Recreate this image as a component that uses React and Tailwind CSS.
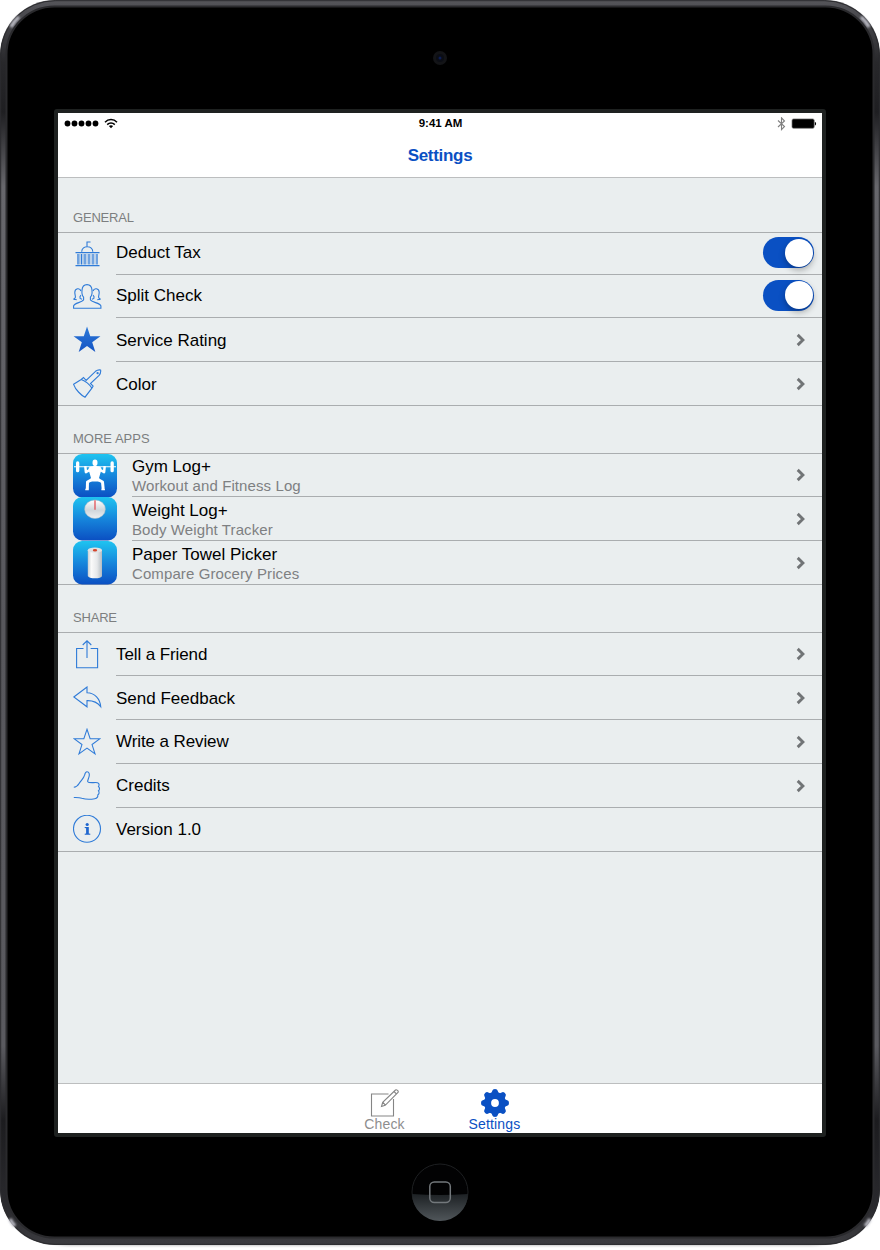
const blue = '#2f7bd8';

function Svg({ w = 30, h = 30, children, className = '' }) {
  return (
    <svg width={w} height={h} viewBox={`0 0 ${w} ${h}`} fill="none" stroke={blue} strokeWidth="1.1" className={className}>
      {children}
    </svg>
  );
}

const star = 'M14 .5l3.3 9.9h10.4l-8.4 6.2 3.2 9.9-8.5-6.1-8.5 6.1 3.2-9.9L.3 10.4h10.4z';

const icons = {
  bank: (
    <Svg w={28} h={28}>
      <path d="M14 6.500V2h3.500M8.700 11.800c.3-6.700 10.800-6.700 11.100 0" />
      <path d="M2.500 12.600h24M2.500 25.600h24" strokeWidth="1.300" />
      <path d="M5 14v10.500M8.500 14v10.500M12 14v10.500M16 14v10.500M20 14v10.500M24 14v10.500" strokeWidth="1.300" />
      <path d="M6.700 14v10.500M10.200 14v10.500M14 14v10.500M18 14v10.500M22 14v10.500" strokeWidth=".5" />
    </Svg>
  ),
  people: (
    <Svg w={30} h={28}>
      <path d="M.6 25.200v-2.400c.8-3 8.700-3.200 10-6v-2.600C8.500 12.100 8.800 9.600 9 7.100 9.300 2.900 11.100 1.600 14 1.600s4.700 1.400 5 5.500c.2 2.500.5 5-1.600 7.100v2.600c1.300 2.800 9.700 3 10.500 6v2.400z" />
      <path d="M7.900 8C7 4.700 1.900 5 1.800 9.300c0 2.700 1 4 .5 5.300-.3.900-1.500 1-1.500 1.600 1 .4 2 .2 3 .6M8 12.200c-.9.900-1.400 2-.9 3.200l1.900.9M20.100 8c.9-3.300 6-3 6.100 1.300 0 2.700-1 4-.5 5.300.3.900 1.500 1 1.500 1.600-1 .4-2 .2-3 .6M20 12.200c.9.900 1.400 2 .9 3.200l-1.900.9" />
    </Svg>
  ),
  starFilled: (
    <Svg w={28} h={28}>
      <defs>
        <linearGradient id="sg" x1="0" y1="0" x2="0" y2="1"><stop stopColor="#2d79d8" /><stop offset="1" stopColor="#1454c4" /></linearGradient>
      </defs>
      <path d={star} fill="url(#sg)" stroke="none" transform="translate(.3 .1) scale(.98)" />
    </Svg>
  ),
  brush: (
    <Svg w={30} h={30}>
      <path d="M.6 15.300L8.200 10.500l2.300-2 2.600 2.900L22.500 2.300c1.700-1.300 3.400-1.700 5.100-1.300.4 2-.3 3.800-1.500 5.400L17.500 14.500l2.600 2.600-1.200 2L12 28.200C8.500 26.500 2.500 21 .6 15.300z" />
      <path d="M8.200 10.500c4.500 1.700 8 4.500 10.700 8.600" />
      <circle cx="24.600" cy="4.200" r=".6" />
    </Svg>
  ),
  share: (
    <Svg w={28} h={30}>
      <path d="M10.500 8.500H3.600v19.300h21V8.500h-7M14 18V1M9.700 5L14 .8 18.300 5" />
    </Svg>
  ),
  reply: (
    <Svg w={30} h={24}>
      <path d="M.8 11L14 1v5.800c8 .2 13 6 13.700 13.800-3.400-4.500-8-6.200-13.700-6v6.200z" />
    </Svg>
  ),
  star: <Svg w={28} h={28}><path d={star} transform="translate(.7 .8) scale(.95)" /></Svg>,
  thumb: (
    <Svg w={28} h={30}>
      <path d="M.8 16.200c3-.2 4-1.500 5.300-3.700 1.800-3 4.700-5.200 5.500-8.300.4-1.900.6-3.500 2.400-3.500 2.200 0 2.800 2.700 2 5.200-.6 2-1.700 3.600-1.200 4.800 1.200 1.800 7.200.4 9.700 1 2 .5 1.800 2.800 1 3.800 1.400 1.200 1.200 3.500 0 4.300 1 1.300.7 3.400-.7 4.100.3 2-1 3.500-3 3.800-3.700.6-9.500.6-13-.5-2.300-.8-5-.8-8-.7" />
    </Svg>
  ),
  info: (
    <Svg w={30} h={30}>
      <circle cx="14" cy="13.800" r="13.500" />
      <circle cx="14.200" cy="9.500" r="1.600" fill="#1f66cf" stroke="none" />
      <path d="M11.700 12h4.100v6.500l1.500.3v1h-5.600v-1l1.400-.3v-5.200l-1.400-.3z" fill="#1f66cf" stroke="none" />
    </Svg>
  ),
};

function AppIcon({ kind }) {
  return (
    <svg width="44" height="44" viewBox="0 0 44 44" className="block shrink-0">
      <defs>
        <linearGradient id="ai" x1="0" y1="0" x2="0" y2="1">
          <stop stopColor="#1fc4f0" /><stop offset=".5" stopColor="#1686dc" /><stop offset="1" stopColor="#0b4fc2" />
        </linearGradient>
        <linearGradient id="roll" x1="0" y1="0" x2="1" y2="0">
          <stop stopColor="#c9ced1" /><stop offset=".25" stopColor="#fafafa" /><stop offset=".65" stopColor="#e6e8ea" /><stop offset="1" stopColor="#b4bcc2" />
        </linearGradient>
        <linearGradient id="dial" x1="0" y1="0" x2="0" y2="1">
          <stop stopColor="#fff" /><stop offset=".55" stopColor="#cfd6db" /><stop offset="1" stopColor="#eceff1" />
        </linearGradient>
      </defs>
      <rect width="44" height="43.500" rx="9" fill="url(#ai)" />
      {kind === 'gym' && (
        <g fill="#fff">
          <path d="M1 12.200h42v1H1z" />
          <rect x="3" y="7.300" width="3.300" height="11" rx="1.600" />
          <rect x="37.500" y="7.300" width="3.300" height="11" rx="1.600" />
          <ellipse cx="22" cy="8.800" rx="2.500" ry="3.200" />
          <path d="M16.500 13c2.500-.7 4.500-.9 5.500-1.700 1 .8 3 1 5.500 1.700 1.200 1 1.300 3 .3 4.800L26 24l2 3.500H16l2-3.500-1.800-6.200c-1-1.800-.9-3.800.3-4.800z" />
          <g fill="none" stroke="#fff" strokeLinejoin="round">
            <path d="M12.300 12.200l.6 6 5.600-3.200M31.700 12.200l-.6 6-5.600-3.200" strokeWidth="2.500" />
            <path d="M18.500 25.800l-4 2.200-.2 7M25.500 25.800l4 2.200.7 7" strokeWidth="3" />
            <path d="M12.300 35.500h3.500M28.400 35.500h3.500" strokeWidth="1.500" />
          </g>
        </g>
      )}
      {kind === 'weight' && (
        <g>
          <ellipse cx="22" cy="12.200" rx="10.400" ry="9.300" fill="url(#dial)" stroke="#9fb4c2" strokeWidth=".5" />
          <path d="M22 3.200v9.500" stroke="#e2454a" strokeWidth="1.200" />
        </g>
      )}
      {kind === 'paper' && (
        <g>
          <path d="M14.800 9.500v25.200c0 3.200 14.200 3.600 14.200 0V9.500z" fill="url(#roll)" />
          <ellipse cx="21.900" cy="9.200" rx="7.100" ry="2.600" fill="#dfe2e4" />
          <ellipse cx="22" cy="9.300" rx="2.200" ry="1.200" fill="#d6452c" />
        </g>
      )}
    </svg>
  );
}

function Chevron() {
  return (
    <svg width="10" height="14" viewBox="0 0 10 14" className="mr-[16px]">
      <path d="M1.700 1.900L6.900 7l-5.200 5.100" fill="none" stroke="#717476" strokeWidth="2.900" />
    </svg>
  );
}

function Toggle() {
  return (
    <div className="mr-2 mb-[2px] flex h-[31px] w-[51px] items-center justify-end rounded-full bg-[#0a50c3] pr-[1.500px]">
      <div className="h-7 w-7 rounded-full bg-white shadow-[0_3px_6px_rgba(0,0,0,0.3)]" />
    </div>
  );
}

function Row({ icon, label, h, control, last, text = 'pt-px' }) {
  return (
    <div className={`flex pl-[15px] ${h} ${last ? 'border-b border-[#aaadaf]' : ''}`}>
      <div className="flex w-[43px] shrink-0 items-center">{icons[icon]}</div>
      <div className={`flex flex-1 items-center justify-between ${last ? '' : 'border-b border-[#aaadaf]'}`}>
        <span className={`text-[17px] leading-5 text-black ${text}`}>{label}</span>
        {control}
      </div>
    </div>
  );
}

function AppRow({ kind, title, sub, h, last, text = 'pt-[3px]' }) {
  return (
    <div className={`flex pl-[15px] ${h} ${last ? 'border-b border-[#aaadaf]' : ''}`}>
      <AppIcon kind={kind} />
      <div className={`ml-[15px] flex flex-1 items-center justify-between ${last ? '' : 'border-b border-[#aaadaf]'}`}>
        <div className={`flex flex-col ${text}`}>
          <span className="text-[17px] leading-5 text-black">{title}</span>
          <span className="-mt-px text-[15px] leading-[19px] tracking-[0.1px] text-[#7e8082]">{sub}</span>
        </div>
        <Chevron />
      </div>
    </div>
  );
}

function Header({ h, children }) {
  return (
    <div className={`flex items-end border-b border-[#aaadaf] pb-[6px] pl-[15px] text-[13px] leading-4 text-[#7c7e80] ${h}`}>
      {children}
    </div>
  );
}

function StatusBar() {
  return (
    <div className="grid h-[21px] grid-cols-3 items-center pr-[5px] pl-[6px]">
      <svg width="56" height="14" viewBox="0 0 56 14">
        {[3.5, 10.5, 17.5, 24.5, 31.5].map((x) => <circle key={x} cx={x} cy="6.500" r="2.900" />)}
        <g fill="none" stroke="#000" strokeWidth="1.500">
          <path d="M41 5.200c3.400-3.600 8.600-3.600 12 0M43.200 7.600c2.200-2.200 5.400-2.200 7.600 0" />
        </g>
        <path d="M44.900 9c1.300-1 2.900-1 4.200 0L47 11.200z" />
      </svg>
      <span className="pt-px text-center text-[11.500px] font-bold text-black">9:41 AM</span>
      <svg width="40" height="14" viewBox="0 0 40 14" className="justify-self-end">
        <path d="M1 3.500l6.500 6L4.500 12.600V.8l3 3.200-6.500 6" fill="none" stroke="#808080" strokeWidth="1.100" />
        <rect x="15" y="1.900" width="22.200" height="9.400" rx="1.500" fill="#000" stroke="#777" strokeWidth=".7" />
        <path d="M37.900 5c1.600 0 1.600 3.400 0 3.400z" />
      </svg>
    </div>
  );
}

function Bezel() {
  return (
    <svg width="880" height="1250" viewBox="0 0 880 1250" className="absolute inset-0">
      <defs>
        <linearGradient id="edge" x1="0" y1="0" x2="0" y2="1">
          <stop stopColor="#55555a" /><stop offset=".05" stopColor="#28282b" /><stop offset=".09" stopColor="#1f1f22" />
          <stop offset=".15" stopColor="#67676c" /><stop offset=".5" stopColor="#57575c" /><stop offset=".84" stopColor="#5a5a5f" />
          <stop offset=".9" stopColor="#1c1c1f" /><stop offset=".97" stopColor="#2a2a2e" /><stop offset="1" stopColor="#3c3c40" />
        </linearGradient>
        <linearGradient id="btn" x1="0" y1="0" x2="0" y2="1"><stop stopColor="#1d2124" /><stop offset="1" stopColor="#50565a" /></linearGradient>
        <filter id="soft"><feGaussianBlur stdDeviation="1.200" /></filter>
      </defs>
      <rect x="30" y="1200" width="820" height="46" rx="40" fill="#c8c8c8" filter="url(#soft)" />
      <rect x="0" y="0" width="880" height="1245" rx="55" fill="url(#edge)" />
      <rect x=".7" y=".7" width="878.600" height="1243.600" rx="54.500" fill="none" stroke="#2c2c2f" strokeWidth="1" />
      <g stroke="#b9b9c2" strokeWidth="3.500" fill="none" filter="url(#soft)">
        <path d="M11 27Q14 21 19 17M869 27Q866 21 861 17M10 1219Q12 1223 15 1226M870 1219Q868 1223 865 1226" />
      </g>
      <rect x="6.500" y="6.500" width="867" height="1231" rx="48" fill="#000" stroke="#2a2a2d" strokeWidth="2" />
      <circle cx="440" cy="58" r="7" fill="#131417" />
      <circle cx="440" cy="58" r="4" fill="#0b0d14" />
      <circle cx="440" cy="58" r="1.500" fill="#0c1d55" />
      <circle cx="440" cy="1192" r="28" fill="#020203" stroke="#25272a" strokeWidth=".8" />
      <path d="M412 1194q28 2 56 0a28 27 0 0 1-56 0z" fill="url(#btn)" />
      <rect x="429.800" y="1182" width="20.500" height="20.500" rx="4.500" fill="none" stroke="#73787c" strokeWidth="1.500" />
    </svg>
  );
}

function Gear() {
  return (
    <svg width="28" height="28" viewBox="0 0 28 28">
      <circle cx="14" cy="14" r="7.400" fill="none" stroke="#0a50c3" strokeWidth="7" />
      <g fill="#0a50c3">
        {[0, 45, 90, 135, 180, 225, 270, 315].map((a) => (
          <path key={a} d="M9.800 5.500l1.500-3.700Q11.500 0 14 0t2.700 1.800l1.500 3.700z" transform={`rotate(${a} 14 14)`} />
        ))}
      </g>
    </svg>
  );
}

export default function App() {
  return (
    <div className="relative h-[1250px] w-[880px] overflow-hidden bg-white pt-[109px] font-['Liberation_Sans',sans-serif]">
      <Bezel />
      <div className="relative mx-auto flex h-[1028px] w-[772px] flex-col rounded-[3px] border-4 border-[#1e2120] bg-[#eaeeef]">
        <header className="h-[65px] shrink-0 border-b border-[#bcbebf] bg-white">
          <StatusBar />
          <h1 className="pt-[11px] text-center text-[17px] leading-[22px] font-bold tracking-[-0.3px] text-[#0a50c3]">Settings</h1>
        </header>
        <main className="flex-1">
          <Header h="h-[55px]"><span className="tracking-[-0.2px]">GENERAL</span></Header>
          <Row h="h-[42px]" icon="bank" label="Deduct Tax" control={<Toggle />} text="pb-[2px]" />
          <Row h="h-[43px]" icon="people" label="Split Check" control={<Toggle />} text="" />
          <Row h="h-[44px]" icon="starFilled" label="Service Rating" control={<Chevron />} text="pt-[2px]" />
          <Row h="h-[44px]" icon="brush" label="Color" control={<Chevron />} text="pt-[2px]" last />
          <Header h="h-[48px]">MORE APPS</Header>
          <AppRow h="h-[43px]" kind="gym" title="Gym Log+" sub="Workout and Fitness Log" text="pt-px" />
          <AppRow h="h-[44px]" kind="weight" title="Weight Log+" sub="Body Weight Tracker" />
          <AppRow h="h-[44px]" kind="paper" title="Paper Towel Picker" sub="Compare Grocery Prices" last />
          <Header h="h-[48px]"><span className="tracking-[-0.2px]">SHARE</span></Header>
          <Row h="h-[43px]" icon="share" label="Tell a Friend" control={<Chevron />} text="pt-[2px] tracking-[-0.1px]" />
          <Row h="h-[44px]" icon="reply" label="Send Feedback" control={<Chevron />} text="pt-[2px]" />
          <Row h="h-[44px]" icon="star" label="Write a Review" control={<Chevron />} text="pt-px tracking-[-0.1px]" />
          <Row h="h-[44px]" icon="thumb" label="Credits" control={<Chevron />} />
          <Row h="h-[44px]" icon="info" label="Version 1.0" last text="" />
        </main>
        <nav className="flex h-[50px] shrink-0 justify-center gap-[50px] border-t border-[#bcbebf] bg-white pr-[1px]">
          <div className="flex w-[60px] flex-col items-center pt-[5px] text-[14px] leading-[14px] tracking-[0.15px] text-[#8e8e8e]">
            <svg width="30" height="28" viewBox="0 0 30 28" fill="none" stroke="#858585" strokeWidth="1.100">
              <path d="M18.500 5H1.500v22h22V10" />
              <path d="M11.500 17.500l1.200-4.200L25.500 1c1-.9 3.500 1 2.500 2.500L15.200 16.300zM24 2.500l2.600 2.600M13 13.300l2.300 2.800" />
            </svg>
            Check
          </div>
          <div className="flex w-[60px] flex-col items-center pt-[5px] text-[14px] leading-[14px] tracking-[0.15px] text-[#0a50c3]">
            <Gear />
            Settings
          </div>
        </nav>
      </div>
    </div>
  );
}
